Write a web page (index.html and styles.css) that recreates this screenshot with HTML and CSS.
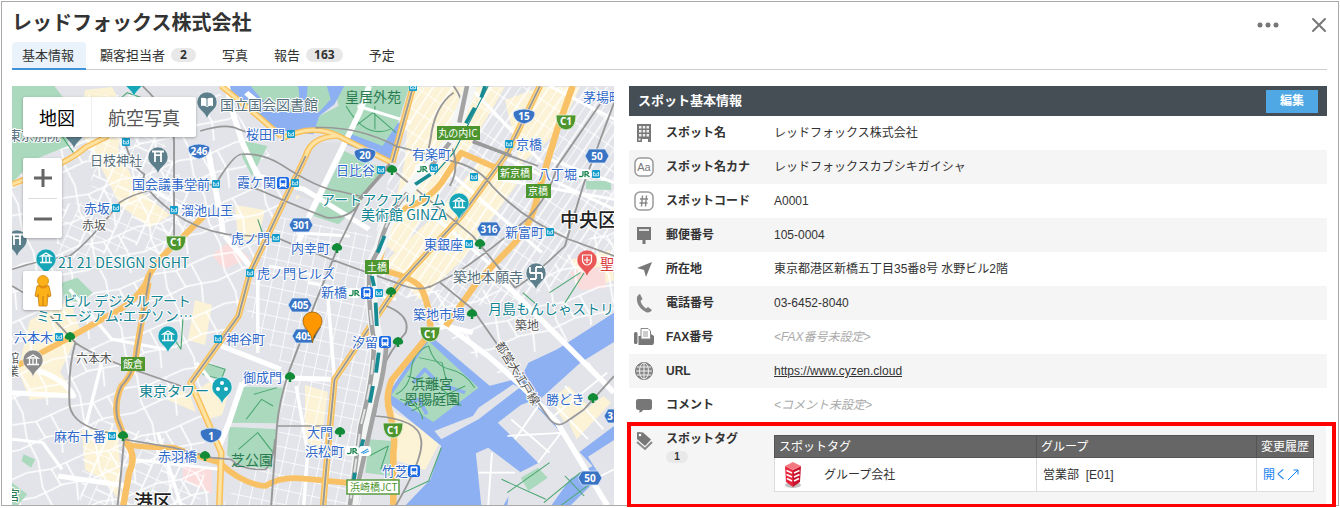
FILE: index.html
```html
<!DOCTYPE html>
<html lang="ja">
<head>
<meta charset="utf-8">
<title>レッドフォックス株式会社</title>
<link rel="stylesheet" href="styles.css">
</head>
<body>
<main class="panel">
  <header class="panel-head">
    <h1>レッドフォックス株式会社</h1>
    <div class="head-actions">
      <button type="button" class="icon-btn" aria-label="メニュー"><svg width="22" height="8" viewBox="0 0 22 8" fill="#777"><circle cx="3" cy="4" r="2.5"/><circle cx="11" cy="4" r="2.5"/><circle cx="19" cy="4" r="2.5"/></svg></button>
      <button type="button" class="icon-btn" aria-label="閉じる"><svg width="16" height="16" viewBox="0 0 16 16" stroke="#777" stroke-width="2" stroke-linecap="round"><path d="M2 2 14 14M14 2 2 14"/></svg></button>
    </div>
  </header>
  <nav class="tabs">
    <a href="#basic" class="tab active">基本情報</a>
    <a href="#contacts" class="tab">顧客担当者<span class="badge">2</span></a>
    <a href="#photos" class="tab">写真</a>
    <a href="#reports" class="tab">報告<span class="badge">163</span></a>
    <a href="#plans" class="tab">予定</a>
  </nav>
  <div class="content">
    <section class="map" aria-label="地図">
      <svg class="map-canvas" viewBox="12 86 602 419">
        <defs>
          <pattern id="st-a" width="26" height="22" patternUnits="userSpaceOnUse" patternTransform="rotate(24)"><path d="M0 0H26M0 0V22M0 12H16M16 0V22" stroke="#fff" stroke-width="1.6" fill="none"/></pattern>
          <pattern id="st-b" width="60" height="50" patternUnits="userSpaceOnUse" patternTransform="rotate(-18)"><path d="M0 8 24 12 60 8M14 0 10 26 14 50M0 34 30 30 60 34M40 10 44 32 40 50M24 12 28 30" stroke="#fff" stroke-width="1.6" fill="none"/></pattern>
          <pattern id="st-g" width="20" height="16" patternUnits="userSpaceOnUse" patternTransform="rotate(-56)"><path d="M0 0H20M0 0V16M0 8H20" stroke="#fff" stroke-width="1.7" fill="none"/></pattern>
          <pattern id="st-s" width="12" height="14" patternUnits="userSpaceOnUse" patternTransform="rotate(12)"><path d="M0 0H12M0 0V14" stroke="#fff" stroke-width="1.6" fill="none"/></pattern>
          <g id="metro"><rect x="-4" y="-4" width="8" height="8" rx="1" fill="#109ccb"/><path d="M-2.6 1.8V-1.8L0 .6 2.6-1.8V1.8H-2.6" fill="none" stroke="#fff" stroke-width=".8"/></g>
          <g id="toei" fill="#118b37"><path d="M0 2C-3 4-6 1-5-1-4-4-1-5 0-5S4-4 5-1C6 1 3 4 0 2Z"/><path d="M-.7 0H.7L1.4 5H-1.4Z"/></g>
          <g id="train"><rect x="-6" y="-6" width="12" height="12" rx="2.5" fill="#1a6ae6"/><path d="M-3-4H3V3H-3ZM-2 3-3.6 5M2 3 3.6 5" fill="#fff" stroke="#fff"/><path d="M-2-2.5H2V0H-2ZM-1.9 1.6H-1M1 1.6H1.9" fill="#1a6ae6" stroke="#1a6ae6" stroke-width=".6"/></g>
          <g id="jr"><rect x="-7" y="-5" width="14" height="10" rx="4" fill="#fff"/><path d="M-1-3V1Q-1 3-5 2.4M1 3V-2.3H3.5Q6 0 2 .3L5.5 3" fill="none" stroke="#16834b" stroke-width="1.3"/></g>
          <g id="shield"><path d="M-9-5Q0-9 9-5 12-4 10 1 8 6 0 8-8 6-10 1-12-4-9-5Z" fill="#3973c4" stroke="#dbe8fa" stroke-width=".8"/></g>
          <g id="hex"><path d="M-8-7H8L12 0 8 7H-8L-12 0Z" fill="#3973c4" stroke="#dbe8fa" stroke-width=".8"/></g>
          <g id="c1"><path d="M-10-7H10Q10 7 0 8-10 7-10-7Z" fill="#4d962f" stroke="#e5f2dd" stroke-width=".8"/></g>
          <g id="pin"><path d="M0 17C-2 9-10 8-10 0A10 10 0 0 1 10 0C10 8 2 9 0 17Z" stroke="#fff" stroke-width=".5"/></g>
          <g id="museum" fill="none" stroke="#fff" stroke-width="1.3"><path d="M-5-2 0-5 5-2ZM-3.5-1V4M0-1V4M3.5-1V4M-6 4.5H6"/></g>
          <g id="torii" fill="none" stroke="#fff" stroke-width="1.8"><path d="M-6-4.5H6M-4-.8H4M-3-4V6M3-4V6"/></g>
        </defs>

        <rect x="12" y="86" width="602" height="419" fill="#e2e4e9"/>
        <!-- commercial districts -->
        <g fill="#fcf3d6">
          <path d="M85 90 112 87 125 110 118 150 139 190 170 215 150 228 120 205 100 165 80 130Z"/>
          <path d="M410 87H505L468 150 440 190 398 255 385 245 405 160Z"/>
          <path d="M480 160 520 180 462 260 420 300 385 262 440 210Z"/>
          <path d="M505 100 540 87 580 87 560 130 520 165Z"/>
          <path d="M30 320 70 300 80 330 60 372 75 395 30 400 18 370Z"/>
          <path d="M82 430 118 430 122 505 105 480 85 470Z"/>
          <path d="M195 300 212 305 205 345 188 340ZM194 392 212 380 228 395 222 415 206 420ZM168 385 190 395 196 412 168 400Z"/>
          <path d="M235 205 265 210 258 240 238 240ZM390 410 441 440 425 470 395 460Z"/>
          <path d="M305 385 328 392 320 450 305 440ZM570 260 610 250 614 280 590 290ZM300 165 318 150 312 185 296 200Z"/>
        </g>
        <path d="M212 255 230 241 250 258 224 269ZM570 272 604 266 606 288 580 290ZM183 467H212V494L183 480Z" fill="#fbdcdc"/>

        <!-- street grids -->
        <path d="M12 180 90 130 215 87 290 180 240 300 200 390 210 505H12Z" fill="url(#st-b)"/>
        <path d="M82 95 140 95 200 215 160 260 95 220ZM85 415 170 440 205 470 200 505H80ZM50 205 110 200 130 250 60 260Z" fill="url(#st-a)"/>
        <path d="M410 87H614V260L520 300 440 310 385 290 372 250Z" fill="url(#st-g)"/>
        <path d="M240 300 270 215 372 235 378 370 360 505H222L280 430 285 370Z" fill="url(#st-s)"/>
        <path d="M400 290 520 290 614 220V310L560 345 500 375 440 330Z" fill="url(#st-b)"/>

        <g transform="translate(12 86) scale(.384 .3333)" fill="none" stroke-linejoin="round">
          <!-- parks and moats -->
          <g fill="#abd9bd">
            <path d="M0 0H110L150 60 145 180 60 220 0 290Z"/>
            <path d="M840 0H1035L1005 110 968 190 860 150 790 125 800 90 850 60Z"/>
            <path d="M866 195 965 248 905 355 850 415 785 390Z"/>
            <path d="M605 165 665 180 625 270 600 215Z"/>
            <path d="M600 902 705 905 690 1012 560 1010Z"/>
            <path d="M565 1022 690 1030 675 1148 600 1140 560 1108Z"/>
            <path d="M505 835 555 850 545 880 500 865ZM130 590 170 575 210 620 180 650 135 640ZM930 1060 990 1065 985 1170 920 1160ZM1495 285 1560 285 1560 312 1495 310ZM30 1105 60 1120 50 1145 25 1125ZM0 1190 40 1225 15 1258H0Z"/>
          </g>
          <path d="M560 0H865L840 55 800 90 785 145 705 135 625 85Z" fill="#8cb0f2"/>
          <path d="M622 0H745Q755 50 730 78 670 80 622 0ZM770 0H820L830 40 800 78 765 70Z" fill="#abd9bd"/>
          <path d="M1005 110H1026L990 228 862 172 878 142 965 180Z" fill="#8cb0f2"/>
          <path d="M775 170 860 170 785 345 725 320Z" fill="#dddfe4"/>

          <!-- bay, canals and reclaimed land -->
          <path d="M1568 680V1258H1025L1090 1180 1118 1080 975 945 985 935 1090 1020 1225 905 1325 875 1345 830 1420 790Z" fill="#8cb0f2"/>
          <path d="M975 930 1085 745 1250 905 1092 1030Z" fill="#8cb0f2"/>
          <path d="M988 928 1085 765 1215 905 1097 1008Z" fill="#abd9bd"/>
          <g fill="#e2e4e9">
            <path d="M1100 1035 1200 990 1215 965 1305 895 1322 905 1215 1000 1118 1060Z"/>
            <path d="M1568 768 1480 830 1375 940 1470 1105 1568 1020Z"/>
            <path d="M1325 957 1352 945 1512 1140 1455 1178 1400 1155 1370 1130 1265 1010Z"/>
            <path d="M1208 1102 1240 1085 1328 1162 1280 1258H1222Z"/>
            <path d="M1300 1172 1390 1120 1462 1165 1405 1258H1290Z"/>
            <path d="M1568 1062 1500 1112 1532 1170 1455 1258H1568Z"/>
          </g>
          <path d="M1400 940 1450 900 1500 960 1440 1010ZM1450 1010 1540 930 1560 950 1470 1060Z" fill="#fcf3d6"/>
          <path d="M1325 1175 1370 1145 1395 1175 1345 1215Z" fill="#abd9bd"/>
          <path d="M1045 890 1075 850 1100 880M1010 960 1060 940 1080 985M1180 920 1130 900" stroke="#8cb0f2" stroke-width="10"/>
          <path stroke="#4ea873" stroke-width="3" d="M1000 925Q1035 905 1040 850T1085 780Q1100 840 1140 850T1205 905M1010 940Q1060 950 1070 1000M1030 870 1110 900 1170 960M1040 975 1180 900M1060 815 1120 830 1130 880M1275 1180 1390 1240M1290 1220 1400 1130M1385 1250 1480 1160 1510 1190 1430 1258M1440 1170 1490 1230M1118 1085 1085 1185 1020 1220M610 1000 650 940 680 960M630 925 690 905M590 1090 640 1040 680 1100M930 1110 980 1080 960 1150M895 120 940 80 1000 140M945 60V130M870 60Q920 160 985 130M1490 560 1440 650M1400 620 1480 560M1330 620 1370 660M350 40 300 20 260 60 320 80M640 400 655 450M445 700 440 790 400 720M500 830 555 850 545 880 498 866ZM160 200 130 150"/>

          <!-- main white streets -->
          <g stroke="#fff">
            <path stroke-width="15" d="M930 0 905 80 780 375 745 470M560 0 575 80 600 170 640 270M510 190 545 400 550 450M640 270 760 310 930 430M1110 700 1240 810Q1340 910 1420 1010L1550 1258M1240 560 1290 600 1568 920M1060 740 1130 720 1200 740M555 450 620 540M600 890 565 1010 540 1080M600 900Q620 860 700 875L830 880M0 920 160 930Q140 880 60 850M120 1170 300 1200M545 780 700 850M610 20 640 50"/>
            <path stroke-width="9" d="M900 60 1040 110M1270 280 1568 340M1290 220 1568 370M1140 260 1380 500M1060 350 1300 590M1190 0 1380 230M1400 0 1568 100M240 800 190 1030M380 1040 440 1258M310 1120 540 1150M150 610 260 760 400 790M740 440 880 450M770 590 1000 640M670 540 840 580M0 1060 80 1070 130 1150M320 280 480 390 600 390M480 830 530 900M1400 220 1568 290M840 880 820 600M740 900 770 1100 760 1258M640 560 640 800"/>
            <path stroke-width="5" d="M1400 940 1500 1060M1440 900 1540 1030M1400 1000 1550 860M1300 1000 1400 1100M1290 1050 1440 1040M1370 960 1310 1060M1430 1040 1370 1130M1250 1100 1240 1258M1215 1160H1310M1500 1190 1568 1150M1500 830 1560 920"/>
          </g>

          <!-- expressways and arterials -->
          <path stroke="#f9c165" stroke-width="17" d="M500 390 425 475Q360 540 350 590 320 650 250 690L150 755 15 838M355 590 325 790Q320 860 285 900 265 950 275 1000L300 1075Q325 1110 305 1160L290 1258M292 1070Q310 1085 420 1085 480 1110 540 1130 600 1195 660 1200 700 1170 760 1178L1005 1205M993 1258V1100Q1000 1050 985 985 970 930 990 880L1090 740Q1090 660 1065 605 1040 570 950 550L990 380Q1090 350 1130 270L1170 200 1250 240 1290 250M1460 0 1420 130 1370 320Q1360 400 1310 470L1210 590 1130 720"/>
          <path stroke="#f9bf5b" stroke-width="17" d="M0 295Q150 230 190 185L250 150M545 0 640 90 700 150M700 160Q780 110 850 150L985 228M850 150Q780 150 765 210L690 390 620 560 590 690 465 890 545 1100 540 1258M1045 0 990 230M1375 0 1290 200 1170 390 1010 590 840 880 825 1060 810 1258"/>
          <path stroke="#fde2a0" stroke-width="9" d="M0 295Q150 230 190 185L250 150M545 0 640 90 700 150M700 160Q780 110 850 150L985 228M850 150Q780 150 765 210L690 390 620 560 590 690 465 890 545 1100 540 1258M1045 0 990 230M1375 0 1290 200 1170 390 1010 590 840 880 825 1060 810 1258"/>

          <!-- subways -->
          <path stroke="#989898" stroke-width="5" d="M765 210 690 390 620 560 590 690 465 890M1375 0 1290 200 1170 390 1010 590 840 880 825 1060 810 1258M325 790Q320 860 285 900 265 950 275 1000L292 1050M360 560 325 790M1045 0 990 230M340 0Q422 90 422 170V470M490 135Q560 110 590 130L640 150M295 170Q310 240 345 265 330 300 420 380 480 430 560 445L690 455Q800 510 1000 590 1060 620 1090 600M0 550Q80 520 150 510 200 470 280 350 330 310 440 300L530 295Q580 200 600 205 650 200 700 235 800 310 850 315L905 330M590 300 640 310Q760 370 820 395 880 400 905 350M790 125Q900 120 1000 180L1160 230Q1220 250 1250 300 1330 400 1450 460L1568 510M905 350 850 480 790 650 720 860Q695 950 690 1020L675 1258M1150 0Q1190 60 1165 130M1150 20Q1100 60 1090 160L1070 270M1140 170Q1170 240 1140 300M1540 40 1420 240Q1400 330 1340 400 1250 490 1160 560L1085 605M1568 50 1490 290Q1460 400 1440 480 1340 590 1310 605L1200 450 1000 260M1115 590 1200 670 1400 1000Q1420 1025 1440 1010L1490 970 1568 870M0 600 30 620M100 690 165 770Q145 850 150 960 160 1020 250 1040M165 770Q200 800 290 840L440 900M290 1060 420 1085 520 1115 570 1120Q600 1155 660 1150 680 1130 685 1060M690 1020H830M292 1060Q285 1160 275 1258M975 660Q1040 690 1025 740 980 800 965 850L945 990Q1060 1000 1065 1060 1075 1110 1000 1258M1200 170 1370 240"/>
          <path stroke="#999" stroke-width="10" d="M985 235 905 340M1200 165 1300 210"/>
          <!-- main line railway -->
          <path stroke="#f4f5f5" stroke-width="32" d="M1195 0 1140 170 1050 290Q980 370 960 480L935 540Q930 640 950 760 950 860 915 1020L885 1258"/>
          <path stroke="#a3a3a3" stroke-width="12" d="M1185 0 1165 110M1140 170 1085 250M1030 320Q975 390 955 490L932 540Q925 640 942 760 945 860 908 1020L880 1258M975 780Q970 860 950 940L900 1200"/>
          <path stroke="#e4e6e7" stroke-width="5" stroke-dasharray="45 30" d="M1030 320Q975 390 955 490L932 540Q925 640 942 760 945 860 908 1020L880 1258"/>
          <path stroke="#178b93" stroke-width="10" d="M1232 0 1222 35M1205 65 1182 112M1090 265 1050 295M970 450 952 500M937 570 943 600M947 650 950 720M955 800 948 860M940 900 932 950M915 1060 908 1090M893 1160 888 1200"/>
          <path stroke="#178b93" stroke-width="3" d="M1240 0 1150 200 1100 265"/>
        </g>

        <!-- map labels: stations -->
        <g class="m-station">
          <text x="246" y="139">桜田門</text><text x="132" y="189">国会議事堂前</text><text x="237" y="187">霞ケ関</text><text x="84" y="213">赤坂</text><text x="181" y="215">溜池山王</text><text x="231" y="243">虎ノ門</text><text x="257" y="278">虎ノ門ヒルズ</text><text x="291" y="253">内幸町</text><text x="336" y="175">日比谷</text><text x="412" y="159">有楽町</text><text x="516" y="149">京橋</text><text x="583" y="102">茅場町</text><text x="538" y="179">八丁堀</text><text x="424" y="249">東銀座</text><text x="505" y="237">新富町</text><text x="321" y="297">新橋</text><text x="413" y="319">築地市場</text><text x="352" y="347">汐留</text><text x="226" y="344">神谷町</text><text x="243" y="382">御成門</text><text x="14" y="342">六本木</text><text x="54" y="441">麻布十番</text><text x="158" y="461">赤羽橋</text><text x="307" y="437">大門</text><text x="305" y="456">浜松町</text><text x="382" y="476">竹芝</text><text x="546" y="404">勝どき</text>
        </g>
        <g class="m-place">
          <text x="82" y="230">赤坂</text><text x="76" y="363">六本木</text><text x="515" y="330">築地</text><text x="7" y="363">館</text><text x="7" y="376">業</text>
          <text transform="translate(495 345) rotate(58)">都営大江戸線</text>
        </g>
        <g class="m-land">
          <text x="220" y="110">国立国会図書館</text><text x="8" y="140" class="m13">東京別院</text><text x="90" y="165" class="m13">日枝神社</text><text x="453" y="282">築地本願寺</text>
        </g>
        <g class="m-poi">
          <text x="321" y="205">アートアクアリウム</text><text x="361" y="220">美術館 GINZA</text><text x="58" y="268">21 21 DESIGN SIGHT</text><text x="63" y="306">ビル デジタルアート</text><text x="36" y="321">ミュージアム:エプソン…</text><text x="139" y="396">東京タワー</text><text x="488" y="314">月島もんじゃストリート</text>
        </g>
        <g class="m-park"><text x="345" y="102">皇居外苑</text><text x="411" y="389">浜離宮</text><text x="404" y="404">恩賜庭園</text><text x="231" y="465">芝公園</text></g>
        <text x="560" y="227" class="m-ward">中央区</text><text x="134" y="509" class="m-ward">港区</text>
        <text x="600" y="269" class="m-red">聖路加</text><text x="6" y="500" class="m-park">宮</text>

        <!-- station marks -->
        <use href="#metro" x="291" y="134"/><use href="#metro" x="126" y="142"/><use href="#metro" x="216" y="184"/><use href="#metro" x="295" y="183"/><use href="#metro" x="116" y="208"/><use href="#metro" x="174" y="210"/><use href="#metro" x="276" y="238"/><use href="#metro" x="250" y="273"/><use href="#metro" x="413" y="87"/><use href="#metro" x="381" y="170"/><use href="#metro" x="434" y="168"/><use href="#metro" x="474" y="177"/><use href="#metro" x="509" y="144"/><use href="#metro" x="596" y="174"/><use href="#metro" x="469" y="244"/><use href="#metro" x="550" y="232"/><use href="#metro" x="379" y="293"/><use href="#metro" x="218" y="339"/><use href="#metro" x="59" y="337"/><use href="#metro" x="112" y="436"/>
        <use href="#toei" x="392" y="170"/><use href="#toei" x="337" y="248"/><use href="#toei" x="480" y="244"/><use href="#toei" x="391" y="292"/><use href="#toei" x="472" y="314"/><use href="#toei" x="398" y="342"/><use href="#toei" x="290" y="377"/><use href="#toei" x="70" y="337"/><use href="#toei" x="123" y="436"/><use href="#toei" x="205" y="456"/><use href="#toei" x="340" y="432"/><use href="#toei" x="593" y="398"/>
        <use href="#train" x="283" y="183"/><use href="#train" x="367" y="293"/><use href="#train" x="385" y="342"/><use href="#train" x="414" y="471"/>
        <use href="#jr" x="422" y="169"/><use href="#jr" x="584" y="174"/><use href="#jr" x="354" y="293"/><use href="#jr" x="352" y="451"/>
        <rect x="359" y="446" width="12" height="10" rx="3" fill="#fff"/><path d="M361 453 368 449M363 453.5 369 451" stroke="#3a9be0" stroke-width="1.3"/>

        <!-- route shields -->
        <g class="m-shield">
          <use href="#shield" x="199" y="151"/><text x="199" y="155">246</text>
          <use href="#shield" x="365" y="155"/><text x="365" y="159">20</text>
          <use href="#shield" x="524" y="116"/><text x="524" y="120">15</text>
          <use href="#shield" x="211" y="435"/><text x="211" y="440">1</text>
          <use href="#hex" x="301" y="225"/><text x="301" y="229">301</text>
          <use href="#hex" x="489" y="229"/><text x="489" y="233">316</text>
          <use href="#hex" x="300" y="305"/><text x="300" y="309">405</text>
          <use href="#hex" x="304" y="336"/><text x="304" y="340">405</text>
          <use href="#hex" x="597" y="156"/><text x="597" y="160">50</text>
          <use href="#hex" x="590" y="478"/><text x="590" y="482">50</text>
          <use href="#hex" x="616" y="416"/><text x="610" y="420">3</text>
          <use href="#c1" x="176" y="243"/><text x="176" y="246">C1</text>
          <use href="#c1" x="566" y="122"/><text x="566" y="125">C1</text>
          <use href="#c1" x="430" y="334"/><text x="430" y="338">C1</text>
          <use href="#c1" x="393" y="430"/><text x="393" y="434">C1</text>
        </g>
        <g class="m-exit">
          <rect x="437" y="126" width="43" height="14"/><text x="458" y="137">丸の内IC</text>
          <rect x="498" y="166" width="34" height="14"/><text x="515" y="177">新京橋</text>
          <rect x="526" y="184" width="25" height="14"/><text x="538" y="195">京橋</text>
          <rect x="365" y="260" width="24" height="14"/><text x="377" y="271">土橋</text>
          <rect x="121" y="357" width="24" height="14"/><text x="133" y="368">飯倉</text>
        </g>
        <rect x="347" y="480" width="52" height="14" fill="#fff" stroke="#5a9a43" stroke-width="1.5"/><text x="350" y="491" class="m-jct">浜崎橋JCT</text>

        <!-- place pins -->
        <use href="#pin" x="207" y="102" fill="#5d7f8c"/><path d="M201 98Q204 97 207 99 210 97 213 98V106Q210 105 207 107 204 105 201 106Z" fill="#fff"/><path d="M207 99V106" stroke="#5d7f8c"/>
        <use href="#pin" x="158" y="157" fill="#5d7f8c"/><use href="#torii" x="158" y="156"/>
        <use href="#pin" x="74" y="132" fill="#5d7f8c"/><use href="#pin" x="17" y="240" fill="#5d7f8c"/><use href="#torii" x="17" y="239"/>
        <use href="#pin" x="536" y="273" fill="#5d7f8c"/><path d="M536 267V279M530 273H542M530 267V273M536 267H542M542 273V279M536 279H530" fill="none" stroke="#fff" stroke-width="1.8"/>
        <use href="#pin" x="134" y="80" fill="#17a6b7"/>
        <use href="#pin" x="46" y="259" fill="#17a6b7"/><use href="#museum" x="46" y="258"/>
        <use href="#pin" x="459" y="203" fill="#17a6b7"/><use href="#museum" x="459" y="203"/>
        <use href="#pin" x="168" y="336" fill="#17a6b7"/><use href="#museum" x="168" y="336"/>
        <use href="#pin" x="222" y="387" fill="#17a6b7"/><g fill="#fff"><circle cx="222" cy="383" r="2"/><circle cx="218" cy="389" r="2"/><circle cx="226" cy="389" r="2"/></g>
        <use href="#pin" x="33" y="360" fill="#8b8b8b"/><use href="#museum" x="33" y="360"/>
        <use href="#pin" x="587" y="260" fill="#e95757"/><path d="M582.5 255H591.5V261Q590 265 587 265 584 265 582.5 261ZM587 257V263M584 260H590" fill="none" stroke="#fff" stroke-width="1.2"/>
        <path d="M313 341 321 327 316 324Z" fill="#333" opacity=".6"/>
        <path d="M312.5 343C312 331 303 329 303 321A9.5 9 0 0 1 322 321C322 329 313 331 312.5 343Z" fill="#ff9800" stroke="#9b6200" stroke-width=".8"/>
      </svg>
      <div class="map-type">
        <button type="button" class="on">地図</button><button type="button">航空写真</button>
      </div>
      <div class="map-zoom">
        <button type="button" aria-label="拡大"><svg width="20" height="20" viewBox="0 0 20 20" stroke="#666" stroke-width="3"><path d="M1 10H19M10 1V19"/></svg></button>
        <button type="button" aria-label="縮小"><svg width="20" height="20" viewBox="0 0 20 20" stroke="#666" stroke-width="3"><path d="M1 10H19"/></svg></button>
      </div>
      <button type="button" class="pegman" aria-label="ストリートビュー"><svg width="22" height="34" viewBox="0 0 22 34"><path d="M5 12Q11 9 17 12L19 22 16 23V20L15 32H7L6 20V23L3 22Z" fill="#fbb117" stroke="#c77d10" stroke-width=".8"/><path d="M11 22V32" stroke="#c77d10"/><path d="M6 12Q11 17 16 12" fill="#e58b12"/><circle cx="11" cy="7" r="5.5" fill="#fbb117" stroke="#d58b12" stroke-width=".8"/></svg></button>
    </section>

    <section class="info">
      <div class="info-head"><h2>スポット基本情報</h2><button type="button" class="edit">編集</button></div>
      <table class="fields">
        <tr><td class="ico"><svg viewBox="0 0 20 20"><path d="M3 1H17V19H14V16H8V19H3Z" fill="#777"/><path d="M5 3H7.5V5.5H5ZM8.800 3H11.2V5.5H8.800ZM12.5 3H15V5.5H12.5ZM5 7H7.5V9.5H5ZM8.800 7H11.2V9.5H8.800ZM12.5 7H15V9.5H12.5ZM5 11H7.5V13.5H5ZM8.800 11H11.2V13.5H8.800ZM12.5 11H15V13.5H12.5ZM4.5 15.5H6.5V17.5H4.5Z" fill="#eee"/></svg></td><th scope="row">スポット名</th><td>レッドフォックス株式会社</td></tr>
        <tr><td class="ico"><svg viewBox="0 0 20 20"><rect x="1" y="1" width="18" height="18" rx="5" fill="#fff" stroke="#999" stroke-width="1.5"/><text x="10" y="14" class="ico-text">Aa</text></svg></td><th scope="row">スポット名カナ</th><td>レッドフォックスカブシキガイシャ</td></tr>
        <tr><td class="ico"><svg viewBox="0 0 20 20"><rect x="1" y="1" width="18" height="18" rx="5" fill="#fff" stroke="#999" stroke-width="1.5"/><path d="M8.5 4.5 7.500 15.5M12.5 4.5 11.5 15.5M6 8H14M5.500 12H13.500" stroke="#888" stroke-width="1.4"/></svg></td><th scope="row">スポットコード</th><td>A0001</td></tr>
        <tr><td class="ico"><svg viewBox="0 0 20 20"><path d="M3 2H17V15H11.5V19H8.5V15H3Z" fill="#777"/><path d="M5 5H15" stroke="#fff" stroke-width="1.5"/></svg></td><th scope="row">郵便番号</th><td>105-0004</td></tr>
        <tr><td class="ico"><svg viewBox="0 0 20 20"><path d="M18 3 12 18 10 11 3 9Z" fill="#777"/></svg></td><th scope="row">所在地</th><td>東京都港区新橋五丁目35番8号 水野ビル2階</td></tr>
        <tr><td class="ico"><svg viewBox="0 0 20 20"><path d="M6 1 8.5 6 6.5 8Q8 13 12 15.5L14 14 18 17Q16 20 13 19.5C6 17 2 10 3 4Q4 1.5 6 1Z" fill="#858585"/></svg></td><th scope="row">電話番号</th><td>03-6452-8040</td></tr>
        <tr><td class="ico"><svg viewBox="0 0 20 20"><rect x="0" y="5" width="3.5" height="12" rx="1.5" fill="#777"/><path d="M4.5 9H7V12H17V7L20 9V15Q20 18 18 18H4.5Z" fill="#777"/><path d="M7 12V1.5H14L16.5 4V12Z" fill="#fff" stroke="#888"/><path d="M9 5H14M9 7H14M9 9H14" stroke="#999"/></svg></td><th scope="row">FAX番号</th><td class="unset">&lt;FAX番号未設定&gt;</td></tr>
        <tr><td class="ico"><svg viewBox="0 0 20 20" fill="none"><circle cx="10" cy="10" r="8.5" fill="#888"/><circle cx="10" cy="10" r="8.5" stroke="#777"/><path d="M2 10H18M10 2V18M3 6H17M3 14H17" stroke="#eee"/><ellipse cx="10" cy="10" rx="4.5" ry="8" stroke="#eee"/></svg></td><th scope="row">URL</th><td><a href="https://www.cyzen.cloud">https://www.cyzen.cloud</a></td></tr>
        <tr><td class="ico"><svg viewBox="0 0 20 20"><path d="M4.5 4H15.5Q18 4 18 6V13Q18 15 15.5 15H9Q8 17.5 4.5 17.5 6 16.5 5.5 15H4.5Q2 15 2 13V6Q2 4 4.5 4Z" fill="#777"/></svg></td><th scope="row">コメント</th><td class="unset">&lt;コメント未設定&gt;</td></tr>
      </table>
      <div class="tag-box"><div class="tag-row">
        <svg class="tag-icon" viewBox="0 0 20 20"><path d="M3 2Q3 1 4 1L9 1.500 17 8.500 11 15 3 8Z" fill="#777"/><circle cx="6" cy="4" r="1.3" fill="#fff"/><path d="M3 11 11 18 18 11" fill="none" stroke="#888" stroke-width="2"/></svg>
        <div class="tag-label"><h3>スポットタグ</h3><span class="count">1</span></div>
        <table class="tags">
          <thead><tr><th scope="col">スポットタグ</th><th scope="col">グループ</th><th scope="col">変更履歴</th></tr></thead>
          <tbody><tr>
            <td><span class="tag-name"><svg width="20" height="28" viewBox="0 0 20 28"><ellipse cx="10" cy="24" rx="8" ry="3" fill="#777" opacity=".45"/><path d="M2 5 10 9V26L3 21Z" fill="#e5263d"/><path d="M18 5 10 9V26L17 21Z" fill="#c9142f"/><path d="M2 5 10 1 18 5 10 9Z" fill="#f57780"/><path d="M3.5 9.5 9 12M3.5 13.5 9 16M4 17.5 9 20M16.5 9.5 11 12M16.5 13.5 11 16M16 17.5 11 20" stroke="#fff" stroke-width="1.5"/></svg>グループ会社</span></td>
            <td>営業部&nbsp; [E01]</td>
            <td><a href="#history">開く<svg width="12" height="12" viewBox="0 0 12 12" fill="none" stroke="#1681ef"><path d="M1 11 11 1M6.5 1H11V5.5"/></svg></a></td>
          </tr></tbody>
        </table>
      </div></div>
    </section>
  </div>
</main>
</body>
</html>
```
FILE: styles.css
```css
* { box-sizing: border-box; }
body {
  margin: 0;
  background: #fff;
  color: #333;
  font: 12px/16px "Liberation Sans", "Noto Sans CJK JP", sans-serif;
}
h1, h2, h3 { margin: 0; }
button { border: 0; padding: 0; background: none; font: inherit; cursor: pointer; }
svg { display: block; }

.panel { margin: 1px; padding: 0 11px 0 10px; border: 1px solid #aaa; }
.panel-head { display: flex; justify-content: space-between; align-items: center; height: 40px; }
.panel-head h1 { font: bold 20px/28px "Noto Sans CJK JP", sans-serif; }
.head-actions { display: flex; align-items: center; gap: 32px; padding-top: 5px; }

.tabs {
  display: flex;
  gap: 2px;
  height: 28px;
  border-bottom: 1px solid #ccc;
  font: 13px/26px "Noto Sans CJK JP", sans-serif;
}
.tab { display: flex; align-items: center; height: 26px; padding: 0 12px; color: #333; text-decoration: none; white-space: nowrap; }
.tab.active { height: 28px; padding-left: 10px; background: #eaf3fc; border-bottom: 2px solid #3f91d8; border-radius: 4px 4px 0 0; }
.badge {
  min-width: 25px;
  margin-left: 6px;
  padding: 0 8px;
  border-radius: 7px;
  background: #e8e8e8;
  font: bold 12px/14px "Noto Sans", sans-serif;
  text-align: center;
}

.content { display: grid; grid-template-columns: 602fr 698fr; gap: 15px; align-items: start; padding-top: 16px; }

.map { position: relative; overflow: hidden; }
.map-canvas { width: 100%; height: auto; font-family: "Noto Sans CJK JP", sans-serif; }
.map-canvas text { paint-order: stroke; stroke: #fff; stroke-width: 2px; stroke-linejoin: round; }
.m-station { font-size: 13px; fill: #2f68c8; }
.m-place { font-size: 12px; fill: #555; }
.m-land { font-size: 14px; fill: #566f7c; }
.map-canvas .m13 { font-size: 13px; }
.m-poi { font-size: 14px; fill: #128391; }
.m-park { font-size: 14px; fill: #2c7c51; }
.m-ward { font-size: 19px; font-weight: 500; fill: #222; }
.m-red { font-size: 14px; fill: #d93b3b; }
.m-shield { font: bold 10px "Noto Sans", sans-serif; fill: #fff; text-anchor: middle; }
.m-exit { font-size: 10px; text-anchor: middle; fill: #fff; }
.m-exit rect { fill: #4d962f; }
.m-jct { font-size: 10px; fill: #4d962f; }
.map-canvas .m-shield text, .map-canvas .m-exit text, .map-canvas .m-jct, .map-canvas .m-park text { stroke: none; }

.map-type, .map-zoom, .pegman { position: absolute; left: 11px; background: #fff; border-radius: 2px; box-shadow: 0 1px 3px rgba(0, 0, 0, .3); }
.map-type { top: 11px; display: flex; font: 18px/40px "Noto Sans CJK JP", sans-serif; }
.map-type button { padding: 0 16px; color: #565656; }
.map-type .on { color: #000; border-right: 1px solid #eee; }
.map-zoom { top: 72px; width: 39px; padding: 0 5px; }
.map-zoom button { display: flex; align-items: center; justify-content: center; width: 100%; height: 40px; }
.map-zoom button + button { border-top: 1px solid #ddd; }
.pegman { top: 185px; width: 39px; height: 39px; display: flex; align-items: center; justify-content: center; }

.info { margin-bottom: -8px; min-width: 0; }
.info-head { display: flex; justify-content: space-between; align-items: center; height: 30px; padding: 0 9px; background: #464e55; color: #fff; }
.info-head h2 { font-size: 13px; line-height: 16px; }
.edit { width: 52px; height: 23px; background: #4fa8e3; color: #fff; font-weight: bold; }

.fields { width: 100%; border-collapse: collapse; }
.fields tr { height: 34px; }
.fields tr:nth-child(even) { background: #f5f5f5; }
.fields td, .fields th { padding: 0; text-align: left; }
.fields .ico { width: 37px; padding-left: 5px; }
.fields th { width: 108px; }
.fields a { color: #333; }
.ico svg { width: 20px; height: 20px; }
.ico-text { font: 11px "Liberation Sans", sans-serif; fill: #777; text-anchor: middle; }
.unset { color: #aaa; font-style: italic; }

.tag-box { position: relative; margin: 0 -9px 0 -2px; padding-right: 6px; border: 4px solid #f00; background: #fff; }
.tag-row { display: grid; grid-template-columns: 20px 96px minmax(0, 1fr); column-gap: 12px; padding: 5px 12px 12px 3px; background: #f5f5f5; }
.tag-icon { width: 20px; height: 20px; }
.tag-label h3 { font-size: 12px; line-height: 16px; }
.count { display: block; width: 22px; margin-top: 4px; border-radius: 6px; background: #e9e9e9; font: bold 10px/12px "Liberation Sans", sans-serif; text-align: center; }
.tags { width: 100%; margin-top: 4px; border-collapse: collapse; background: #fff; table-layout: fixed; }
.tags th, .tags td { border: 1px solid #ddd; padding: 0 6px; text-align: left; }
.tags th { height: 22px; padding: 0 4px; background: #666; border-color: #555; color: #fff; font-weight: normal; }
.tags th + th { border-left-color: #888; }
.tags th:nth-child(1) { width: 262px; }
.tags th:nth-child(3) { width: 57px; }
.tags td { height: 34px; }
.tag-name { display: flex; align-items: center; gap: 21px; padding-left: 2px; }
.tags a { display: flex; align-items: center; color: #1681ef; text-decoration: none; }
```
